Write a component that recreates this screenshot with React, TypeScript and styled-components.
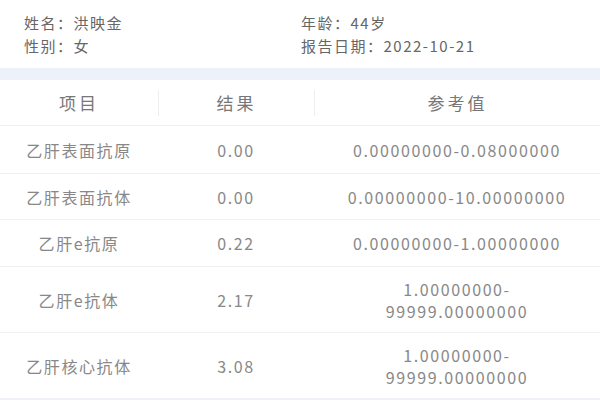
import styled, { createGlobalStyle } from "styled-components"

const GlobalStyle = createGlobalStyle`
    body {
        margin: 0;
        background: #fff;
        font-family: "Noto Sans CJK SC", "Noto Sans", sans-serif;
    }
`

const rows = [
    { name: "乙肝表面抗原", result: "0.00", ref: ["0.00000000-0.08000000"], height: 47, line: false },
    { name: "乙肝表面抗体", result: "0.00", ref: ["0.00000000-10.00000000"], height: 46, line: true },
    { name: "乙肝e抗原", result: "0.22", ref: ["0.00000000-1.00000000"], height: 47, line: true },
    { name: "乙肝e抗体", result: "2.17", ref: ["1.00000000-", "99999.00000000"], height: 66, line: true },
    { name: "乙肝核心抗体", result: "3.08", ref: ["1.00000000-", "99999.00000000"], height: 67, line: true },
]

export default function App() {
    return (
        <Page>
            <GlobalStyle />
            <Info>
                <InfoItem>姓名：洪映金</InfoItem>
                <InfoItem>年龄：44岁</InfoItem>
                <InfoItem>性别：女</InfoItem>
                <InfoItem>报告日期：2022-10-21</InfoItem>
            </Info>
            <Band />
            <HeadRow>
                <HeadCell>项目</HeadCell>
                <HeadCell $divider>结果</HeadCell>
                <HeadCell $divider>参考值</HeadCell>
            </HeadRow>
            {rows.map((row) => (
                <Row key={row.name} $h={row.height} $line={row.line}>
                    <Cell>{row.name}</Cell>
                    <Cell>{row.result}</Cell>
                    <Cell>
                        {row.ref.map((l) => (
                            <span key={l}>{l}</span>
                        ))}
                    </Cell>
                </Row>
            ))}
        </Page>
    )
}

const Page = styled.div`
    width: 600px;
    height: 400px;
    overflow: hidden;
    border-bottom: 2px solid #eef1f8;
    box-sizing: border-box;
`

const Info = styled.div`
    display: grid;
    grid-template-columns: 277px 1fr;
    align-content: start;
    padding: 11px 0 0 24px;
    height: 68px;
    box-sizing: border-box;
`

const InfoItem = styled.div`
    font-size: 15px;
    line-height: 23px;
    color: #666;
    letter-spacing: 1.5px;
`

const Band = styled.div`
    height: 12px;
    background: #edf1fa;
`

const HeadRow = styled.div`
    display: grid;
    grid-template-columns: 158px 156px 1fr;
    height: 45px;
    border-bottom: 1px solid #f0f0f0;
    align-items: center;
`

const HeadCell = styled.div<{ $divider?: boolean }>`
    text-align: center;
    font-size: 17px;
    color: #777;
    letter-spacing: 3px;
    line-height: 26px;
    border-left: ${(p) => (p.$divider ? "1px solid #eee" : "none")};
`

const Row = styled.div<{ $h: number; $line: boolean }>`
    display: grid;
    grid-template-columns: 158px 156px 1fr;
    height: ${(p) => p.$h}px;
    box-sizing: border-box;
    border-top: ${(p) => (p.$line ? "1px solid #f0f0f0" : "none")};
    align-items: center;
`

const Cell = styled.div`
    display: flex;
    flex-direction: column;
    align-items: center;
    font-size: 16px;
    line-height: 22px;
    color: #888;
    letter-spacing: 1.6px;
`
